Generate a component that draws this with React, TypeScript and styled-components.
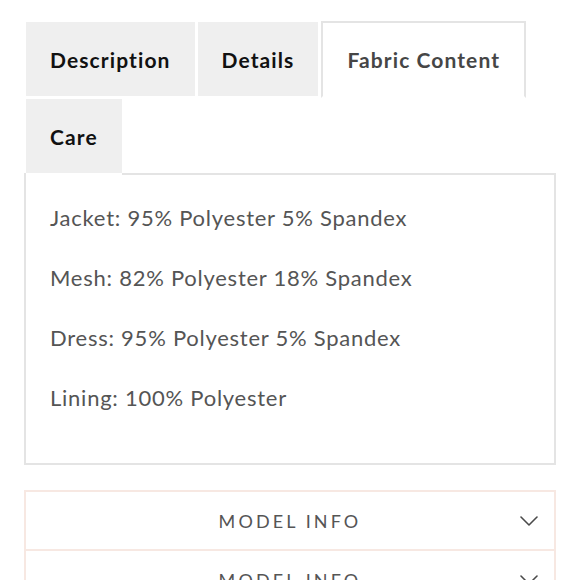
import styled, { createGlobalStyle } from "styled-components";

const GlobalStyle = createGlobalStyle`
  html, body {
    margin: 0;
    padding: 0;
    background: #ffffff;
  }
  body {
    font-family: Lato, "Open Sans", "Liberation Sans", sans-serif;
    -webkit-font-smoothing: antialiased;
  }
`;

const Page = styled.div`
  width: 532px;
  padding: 21px 0 0 24px;
`;

const TabList = styled.ul`
  list-style: none;
  margin: 0 0 -2px;
  padding: 0 0 0 2px;
  display: flex;
  flex-wrap: wrap;
  align-items: flex-end;
  column-gap: 3px;
  row-gap: 1px;
  position: relative;
  z-index: 1;
`;

const Tab = styled.li<{ $active?: boolean }>`
  box-sizing: border-box;
  display: flex;
  align-items: center;
  height: ${(p) => (p.$active ? "77px" : "76px")};
  padding: 0 ${(p) => (p.$active ? "24px" : "24px")};
  background: ${(p) => (p.$active ? "#ffffff" : "#efefef")};
  border: 2px solid ${(p) => (p.$active ? "#e4e4e4" : "transparent")};
  border-width: ${(p) => (p.$active ? "2px 2px 2px 2px" : "0 0 2px 0")};
  border-bottom-color: #ffffff;
  background-clip: padding-box;
  font-size: 21px;
  font-weight: 700;
  color: ${(p) => (p.$active ? "#464646" : "#111111")};
  letter-spacing: 1.1px;
  cursor: pointer;
`;

const Panel = styled.div`
  box-sizing: border-box;
  border: 2px solid #e4e4e4;
  padding: 13px 24px 35px;
  height: 292px;
`;

const Line = styled.p`
  margin: 0;
  line-height: 60px;
  font-size: 22px;
  color: #555555;
  letter-spacing: 0.75px;
`;

const Accordion = styled.div`
  margin-top: 25px;
`;

const AccordionItem = styled.div`
  box-sizing: border-box;
  height: 61px;
  border: 2px solid #f7e8e2;
  & + & {
    border-top: none;
    height: 60px;
  }
  display: grid;
  grid-template-columns: 1fr auto 1fr;
  align-items: center;
`;

const AccordionTitle = styled.span`
  grid-column: 2;
  font-size: 18px;
  letter-spacing: 3.1px;
  color: #555555;
  text-transform: uppercase;
`;

const Chevron = styled.svg`
  grid-column: 3;
  justify-self: end;
  margin-right: 16px;
`;

const tabs = ["Description", "Details", "Fabric Content", "Care"];

const fabric = [
  "Jacket: 95% Polyester 5% Spandex",
  "Mesh: 82% Polyester 18% Spandex",
  "Dress: 95% Polyester 5% Spandex",
  "Lining: 100% Polyester",
];

function ChevronDown() {
  return (
    <Chevron width="18" height="10" viewBox="0 0 18 10" fill="none">
      <polyline
        points="1,1 9,9 17,1"
        stroke="#4a4a4a"
        strokeWidth="1.6"
        strokeLinecap="round"
        strokeLinejoin="round"
      />
    </Chevron>
  );
}

export default function App() {
  return (
    <Page>
      <GlobalStyle />
      <TabList>
        {tabs.map((t) => (
          <Tab key={t} $active={t === "Fabric Content"}>
            {t}
          </Tab>
        ))}
      </TabList>
      <Panel>
        {fabric.map((f) => (
          <Line key={f}>{f}</Line>
        ))}
      </Panel>
      <Accordion>
        <AccordionItem>
          <AccordionTitle>Model Info</AccordionTitle>
          <ChevronDown />
        </AccordionItem>
        <AccordionItem>
          <AccordionTitle>Model Info</AccordionTitle>
          <ChevronDown />
        </AccordionItem>
      </Accordion>
    </Page>
  );
}
